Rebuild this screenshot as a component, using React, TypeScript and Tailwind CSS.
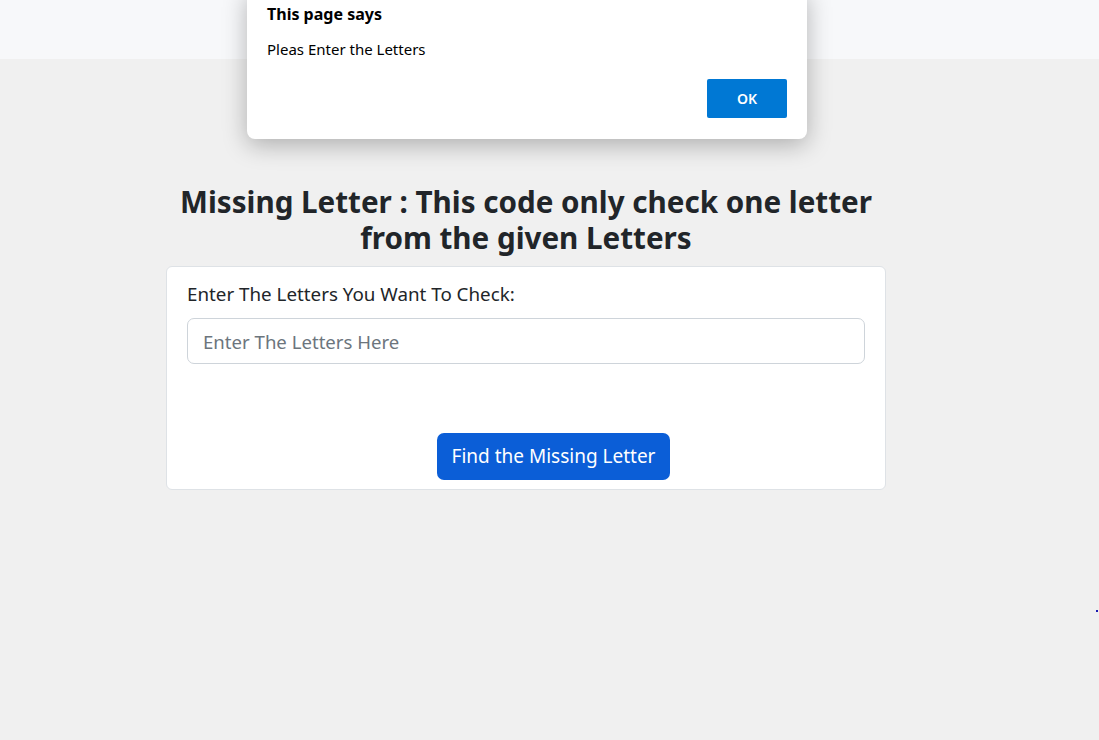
import React from "react";

export default function App() {
  const font = { fontFamily: '"Noto Sans", "Open Sans", sans-serif' };
  return (
    <div className="relative w-[1099px] h-[740px] overflow-hidden bg-[#f0f0f0]" style={font}>
      <div className="h-[59px] bg-[#f7f8fa]" />
      <div className="flex flex-col items-center pt-[125px] pr-[47px]">
        <h2 className="w-[720px] text-center text-[29.6px] leading-[36px] font-bold text-[#212529]">
          Missing Letter : This code only check one letter from the given Letters
        </h2>
        <div className="mt-[10px] w-[720px] h-[224px] bg-white border border-[#dee2e6] rounded-[6px] px-[20px] pt-[13px] flex flex-col">
          <label className="text-[18.8px] leading-[28px] text-[#212529]">Enter The Letters You Want To Check:</label>
          <input
            className="mt-[10px] h-[46px] w-full rounded-[7px] border border-[#ced4da] px-[15px] text-[18.6px] text-[#212529] placeholder:text-[#6c757d] outline-none"
            placeholder="Enter The Letters Here"
          />
          <div className="flex mt-[69px] pl-[250px]">
            <button className="h-[47px] w-[233px] rounded-[7px] bg-[#0b5ed7] text-white text-[19px]">
              Find the Missing Letter
            </button>
          </div>
        </div>
      </div>
      <span className="absolute left-[1096px] top-[610px] w-[2px] h-[2px] bg-[#1a1ab0]" />
      <div className="absolute left-[247px] top-[-10px] w-[560px] h-[149px] bg-white rounded-b-[8px] shadow-[0_6px_24px_rgba(0,0,0,0.28)] px-[20px] pt-[10px]">
        <div className="text-[16px] leading-[22px] font-bold text-black mt-[3px]">This page says</div>
        <div className="text-[15px] leading-[20px] text-black mt-[14px]">Pleas Enter the Letters</div>
        <div className="flex justify-end mt-[20px]">
          <button className="w-[80px] h-[39px] bg-[#0078d4] rounded-[2px] text-white text-[14px] font-semibold">OK</button>
        </div>
      </div>
    </div>
  );
}
